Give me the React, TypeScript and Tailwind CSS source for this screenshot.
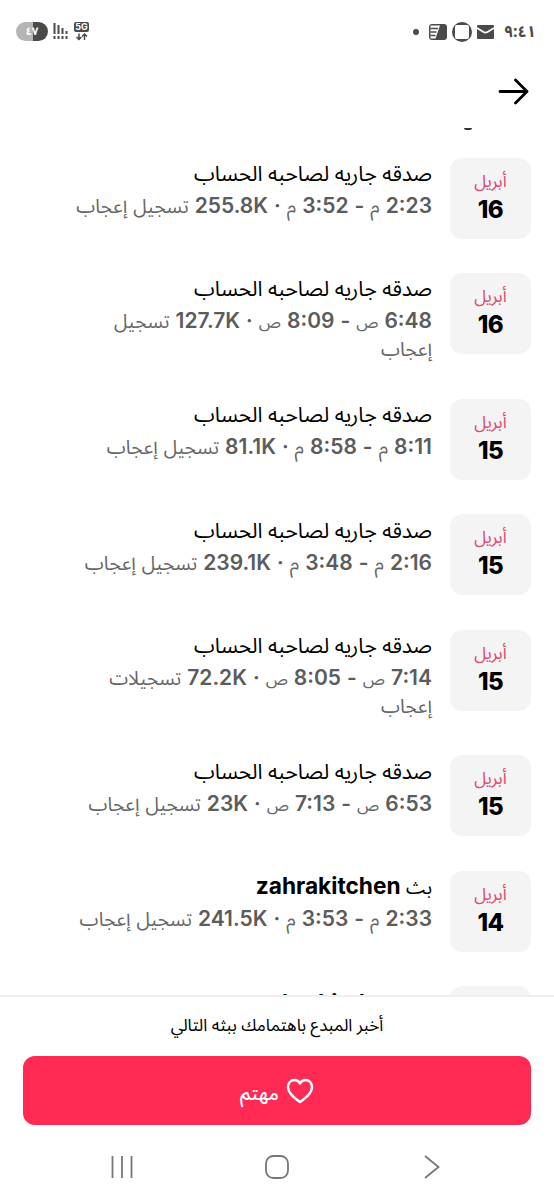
import { Fragment } from "react";

type Live = {
  day: string;
  host?: string;
  start: string;
  end: string;
  period: string;
  likes: string;
  suffix: string[];
};

const lives: Live[] = [
  { day: "16", start: "2:23", end: "3:52", period: "م", likes: "255.8K", suffix: ["تسجيل إعجاب"] },
  { day: "16", start: "6:48", end: "8:09", period: "ص", likes: "127.7K", suffix: ["تسجيل", "إعجاب"] },
  { day: "15", start: "8:11", end: "8:58", period: "م", likes: "81.1K", suffix: ["تسجيل إعجاب"] },
  { day: "15", start: "2:16", end: "3:48", period: "م", likes: "239.1K", suffix: ["تسجيل إعجاب"] },
  { day: "15", start: "7:14", end: "8:05", period: "ص", likes: "72.2K", suffix: ["تسجيلات", "إعجاب"] },
  { day: "15", start: "6:53", end: "7:13", period: "ص", likes: "23K", suffix: ["تسجيل إعجاب"] },
  { day: "14", host: "zahrakitchen", start: "2:33", end: "3:53", period: "م", likes: "241.5K", suffix: ["تسجيل إعجاب"] },
];

function Latin({ children }: { children: string }) {
  return (
    <span dir="ltr" className="font-['Inter'] text-[21px] leading-none font-semibold text-[#5c5c5c]">
      {children}
    </span>
  );
}

function Period({ children }: { children: string }) {
  return <span className={`leading-none ${children === "ص" ? "text-[17px]" : "text-[19.500px]"}`}>{children}</span>;
}

function LiveTitle({ host }: { host?: string }) {
  return (
    <h3 className="h-[31px] text-[21px] leading-[29px] text-black">
      {host ? (
        <>
          <span className="text-[19px] leading-none">بث</span>{" "}
          <span className="font-['Inter'] text-[22.700px] leading-none font-bold">{host}</span>
        </>
      ) : (
        "صدقه جاريه لصاحبه الحساب"
      )}
    </h3>
  );
}

function StatusBar() {
  return (
    <div dir="ltr" className="flex h-[62px] shrink-0 items-center justify-between pr-[18px] pl-4 text-[#4a4a4a]">
      <div className="flex items-center gap-1">
        <span className="flex h-[19px] w-8 items-center justify-center rounded-full bg-[linear-gradient(90deg,#b5b5b5_52%,#4a4a4a_52%)] text-[11px] leading-none font-bold text-white">
          ٤٧
        </span>
        <svg width="18" height="18" viewBox="0 0 18 18" stroke="currentColor" strokeWidth="2" fill="none">
          <path d="M2.500 1v11M6.500 3v9M10.500 6v6M14.500 9v3M2.500 14v3M6.500 14v3M10.500 14v3M14.500 14v3" />
        </svg>
        <div className="flex flex-col items-center">
          <span className="flex h-[10px] w-[15px] items-center justify-center rounded-xs bg-[#4a4a4a] font-['Inter'] text-[9px] leading-none font-bold text-white">
            5G
          </span>
          <svg width="13" height="9" viewBox="0 0 13 9" fill="none" stroke="currentColor" strokeWidth="1.500">
            <path d="M4 1.500v6M1.500 5 4 7.500 6.500 5M9.500 8V2M7 4.500 9.500 2 12 4.500" />
          </svg>
        </div>
      </div>
      <div className="flex items-center pt-0.5">
        <span className="mr-[10px] size-[6px] rounded-full bg-[#4a4a4a]" />
        <svg className="mr-[5px]" width="18" height="16" viewBox="0 0 18 16">
          <rect width="18" height="16" rx="3" fill="currentColor" />
          <path d="M1.500 1.500H11L6.500 14.500h-5Z" fill="#fff" />
          <path d="M1.500 4.500h7.500M1.500 8h6M1.500 11.500h5" stroke="currentColor" strokeWidth="1.500" />
        </svg>
        <svg className="mr-[5px]" width="20" height="20" viewBox="0 0 20 20">
          <circle cx="10" cy="10" r="10" fill="currentColor" />
          <rect x="3" y="3" width="14" height="14" rx="2" fill="#fff" />
        </svg>
        <svg className="mr-[10px]" width="17" height="14" viewBox="0 0 17 14">
          <rect width="17" height="14" rx="1" fill="currentColor" />
          <path d="M0 3 6.500 7q2 1.200 4 0L17 3" stroke="#fff" strokeWidth="1.600" fill="none" />
        </svg>
        <span className="text-[16px] leading-none font-bold">٩:٤١</span>
      </div>
    </div>
  );
}

function LiveRow({ live }: { live: Live }) {
  return (
    <div className="flex gap-[18px] pb-[34.400px]">
      <div className="flex h-[81px] w-[81px] shrink-0 flex-col items-center rounded-xl bg-[#f4f4f4] pt-[11px]">
        <span className="text-[17px] leading-[27px] text-[#e0486f]">أبريل</span>
        <span className="font-['Inter'] text-[24px] leading-[27px] font-extrabold tracking-[-0.5px] text-black">{live.day}</span>
      </div>
      <div className="min-w-0 flex-1 pt-[2.500px] whitespace-nowrap">
        <LiveTitle host={live.host} />
        <p className="pt-[2px] text-[19.200px] leading-[28px] text-[#666] [word-spacing:1px]">
          <Latin>{live.start}</Latin> <Period>{live.period}</Period> <Latin>-</Latin> <Latin>{live.end}</Latin>{" "}
          <Period>{live.period}</Period> <Latin>·</Latin> <Latin>{live.likes}</Latin>{" "}
          {live.suffix.map((line, index) => (
            <Fragment key={line}>
              {index > 0 && <br />}
              {line}
            </Fragment>
          ))}
        </p>
      </div>
    </div>
  );
}

export default function App() {
  return (
    <div
      dir="rtl"
      className="flex h-[1200px] w-[554px] flex-col overflow-hidden bg-white font-['Noto_Sans_Arabic','Noto_Sans','DejaVu_Sans',sans-serif]"
    >
      <StatusBar />
      <header className="flex h-[66px] shrink-0 items-start px-[25px] pt-4">
        <svg width="31" height="28" viewBox="0 0 31 28" fill="none" stroke="#000" strokeWidth="2.800" strokeLinecap="round" strokeLinejoin="round">
          <path d="M2 13.500h27M17.500 2 29 13.500 17.500 25" />
        </svg>
      </header>

      <main className="h-[867px] shrink-0 overflow-hidden px-[23px]">
        <div className="flex h-[29.500px] pr-[59px]">
          <span className="h-[2px] w-[8px] rounded-b-full bg-[#333]" />
        </div>
        {lives.map((live, index) => (
          <LiveRow key={index} live={live} />
        ))}
        {/* next entry, mostly below the fold */}
        <div className="flex gap-[18px]">
          <div className="h-[81px] w-[81px] shrink-0 rounded-xl bg-[#f4f4f4]" />
          <div className="pt-[4px]">
            <LiveTitle host="zahrakitchen" />
          </div>
        </div>
      </main>

      <footer className="flex flex-1 flex-col border-t-2 border-[#efefef]">
        <p className="h-[59px] pt-[13px] text-center text-[17px] leading-8 text-black">أخبر المبدع باهتمامك ببثه التالي</p>
        <button type="button" className="mx-[23px] flex h-[69px] shrink-0 items-center justify-center gap-[7px] rounded-xl bg-[#ff2b54] text-white">
          <svg width="28" height="26" viewBox="0 0 28 26" fill="none" stroke="currentColor" strokeWidth="2.400" strokeLinejoin="round">
            <path d="M14 24C8 19.500 2 15 2 9c0-4 2.800-7 6.300-7C11 2 13 3.500 14 5.500 15 3.500 17 2 19.700 2 23.200 2 26 5 26 9c0 6-6 10.500-12 15Z" />
          </svg>
          <span className="pt-1.5 text-[19px] leading-7 font-medium">مهتم</span>
        </button>
        <nav dir="ltr" className="flex flex-1 items-center justify-between pr-[114px] pl-[110px] pt-2 text-[#777]">
          <svg width="24" height="24" viewBox="0 0 24 24" stroke="currentColor" strokeWidth="1.800">
            <path d="M2.500 1v22M12 1v22M21.500 1v22" />
          </svg>
          <svg className="mr-[5px]" width="24" height="24" viewBox="0 0 24 24" fill="none" stroke="currentColor" strokeWidth="1.800">
            <rect x="1" y="1" width="22" height="22" rx="7.500" />
          </svg>
          <svg width="16" height="24" viewBox="0 0 16 24" fill="none" stroke="currentColor" strokeWidth="1.800">
            <path d="M1 1 14.500 12 1 23" />
          </svg>
        </nav>
      </footer>
    </div>
  );
}
